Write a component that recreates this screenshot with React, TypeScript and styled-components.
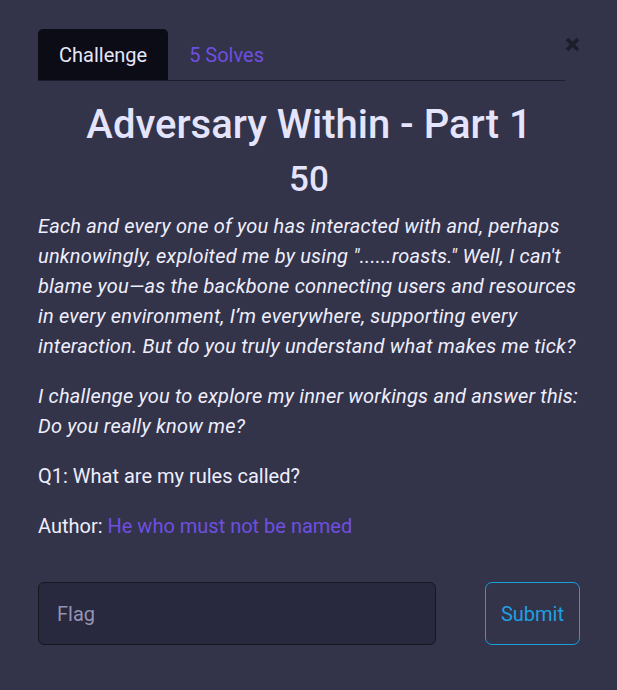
import { createGlobalStyle } from 'styled-components';
import styled from 'styled-components';

const GlobalStyle = createGlobalStyle`
    html, body {
        margin: 0;
        padding: 0;
        background: #33334a;
    }
    * {
        box-sizing: border-box;
    }
`;

const ModalBody = styled.div`
    width: 617px;
    min-height: 690px;
    padding: 29px 37px 0 38px;
    background: #33334a;
    font-family: Roboto, 'Liberation Sans', sans-serif;
    color: #eeeefc;
`;

const TabRow = styled.div`
    display: flex;
    align-items: flex-start;
`;

const TabList = styled.ul`
    display: flex;
    flex: 1;
    margin: 0;
    padding: 0;
    list-style: none;
    border-bottom: 1px solid #1c1c2a;
`;

const Tab = styled.li<{ $active?: boolean }>`
    height: 51px;
    padding: 0 21px;
    display: flex;
    align-items: center;
    font-size: 20px;
    border-radius: 5px 5px 0 0;
    background: ${(p) => (p.$active ? '#0c0c17' : 'transparent')};
    color: ${(p) => (p.$active ? '#e6e6fa' : '#6e4fe0')};
    cursor: pointer;
`;

const CloseBtn = styled.button`
    width: 15px;
    height: 15px;
    margin-top: 8px;
    padding: 0;
    border: 0;
    background: transparent;
    display: flex;
    align-items: center;
    justify-content: center;
    cursor: pointer;
`;

const Title = styled.h2`
    margin: 20px 0 10px;
    font-size: 40px;
    line-height: 1.2;
    font-weight: 500;
    text-align: center;
    color: #e4e4fc;
`;

const Points = styled.h3`
    margin: 0 0 10px;
    font-size: 35px;
    line-height: 1.2;
    font-weight: 500;
    text-align: center;
    color: #e4e4fc;
`;

const Para = styled.p<{ $italic?: boolean; $last?: boolean }>`
    margin: 0 0 ${(p) => (p.$last ? 0 : 20)}px;
    font-size: 20px;
    line-height: 30px;
    font-style: ${(p) => (p.$italic ? 'italic' : 'normal')};
    letter-spacing: ${(p) => (p.$italic ? '0.2px' : 'normal')};
`;

const AuthorLink = styled.a`
    color: #6e4fe0;
    text-decoration: none;
`;

const FlagForm = styled.form`
    display: flex;
    align-items: center;
    justify-content: space-between;
    padding-top: 41px;
`;

const FlagInput = styled.input`
    width: 398px;
    height: 63px;
    padding: 0 18px;
    background: #28283e;
    border: 1px solid #17171f;
    border-radius: 6px;
    font-family: Roboto, 'Liberation Sans', sans-serif;
    font-size: 20px;
    color: #eeeefc;
    outline: none;

    &::placeholder {
        color: #9494b4;
    }
`;

const SubmitBtn = styled.button`
    width: 95px;
    height: 63px;
    background: transparent;
    border: 1px solid #1a9fde;
    border-radius: 7px;
    font-family: Roboto, 'Liberation Sans', sans-serif;
    font-size: 20px;
    color: #1fa0e0;
    cursor: pointer;
`;

const App = (): JSX.Element => {
    return (
        <>
            <GlobalStyle />
            <ModalBody>
                <TabRow>
                    <TabList>
                        <Tab $active>Challenge</Tab>
                        <Tab>5 Solves</Tab>
                    </TabList>
                    <CloseBtn aria-label="Close">
                        <svg width="15" height="15" viewBox="0 0 15 15">
                            <path d="M2 2 L13 13 M13 2 L2 13" stroke="#1d1d2c" strokeWidth="3.8" strokeLinecap="butt" />
                        </svg>
                    </CloseBtn>
                </TabRow>
                <Title>Adversary Within - Part 1</Title>
                <Points>50</Points>
                <Para $italic>
                    Each and every one of you has interacted with and, perhaps unknowingly, exploited me by using
                    "......roasts." Well, I can't blame you—as the backbone connecting users and resources in every
                    environment, I’m everywhere, supporting every interaction. But do you truly understand what makes
                    me tick?
                </Para>
                <Para $italic>I challenge you to explore my inner workings and answer this: Do you really know me?</Para>
                <Para>Q1: What are my rules called?</Para>
                <Para $last>
                    Author: <AuthorLink href="#">He who must not be named</AuthorLink>
                </Para>
                <FlagForm onSubmit={(e) => e.preventDefault()}>
                    <FlagInput type="text" placeholder="Flag" />
                    <SubmitBtn type="submit">Submit</SubmitBtn>
                </FlagForm>
            </ModalBody>
        </>
    );
};

export default App;
